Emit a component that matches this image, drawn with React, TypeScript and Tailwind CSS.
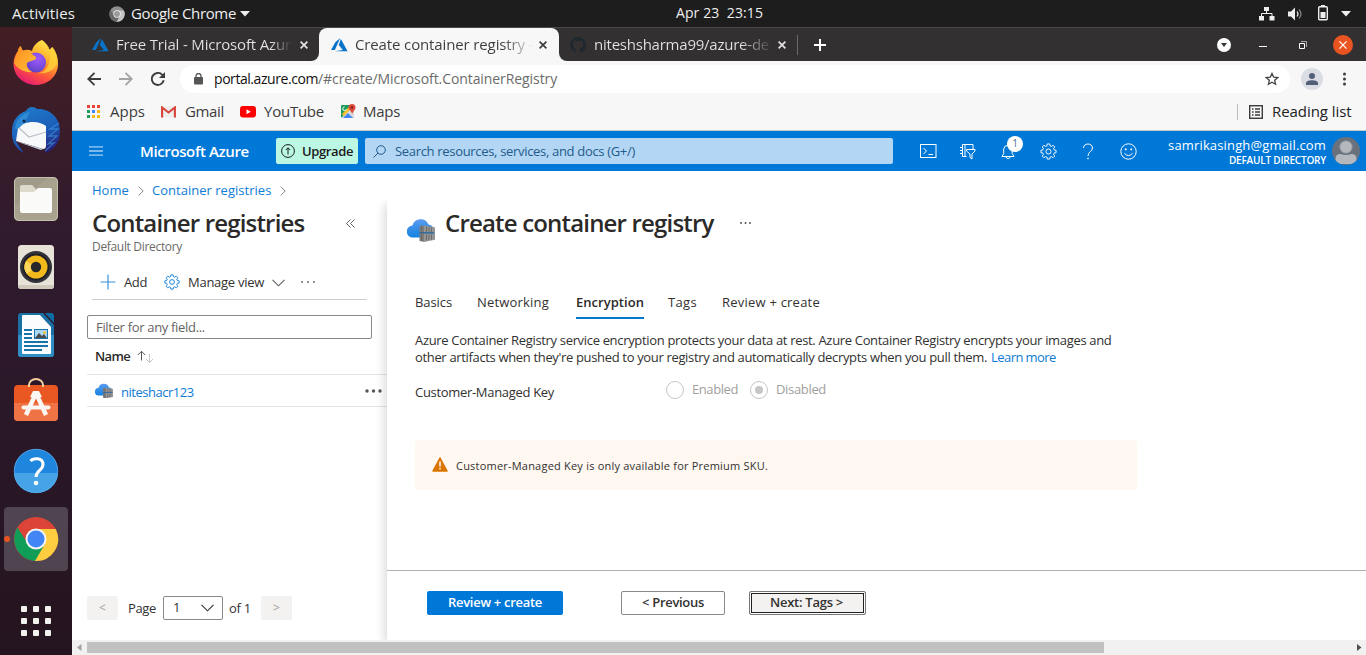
import React from 'react';

type P = { className?: string };

function Firefox() {
  return (
    <svg width="48" height="48" viewBox="0 0 48 48">
      <defs>
        <linearGradient id="ff" x1="0.8" y1="0" x2="0.25" y2="1">
          <stop offset="0" stopColor="#fff14f" /><stop offset="0.35" stopColor="#ffb02e" /><stop offset="0.65" stopColor="#ff5a36" /><stop offset="1" stopColor="#e3157a" />
        </linearGradient>
        <radialGradient id="fp" cx="0.6" cy="0.3" r="0.8"><stop offset="0" stopColor="#a05bff" /><stop offset="1" stopColor="#5a3fc0" /></radialGradient>
        <linearGradient id="fh" x1="0" y1="0" x2="1" y2="1"><stop offset="0" stopColor="#ff8a1f" /><stop offset="1" stopColor="#ffc43a" /></linearGradient>
      </defs>
      <path d="M30 2c4 3 6 6 7.500 10l2.500-3c4 5 6.500 11 6 18C45.500 38 36 47 24 47S1.500 38 1.500 26c0-6 2-10 4.500-13 .3-2 1-4 3-5 0 2 1 3.500 2 4.500 3-1 6-1 9 .5 1-5 5-9 10-11z" fill="url(#ff)" />
      <circle cx="24" cy="24.500" r="10" fill="url(#fp)" />
      <path d="M2 25c1-7 4-11 4-12 .3-2 1-4 3-5 0 2 1 4 2 5 4-.8 7 .5 9 3 2 2 4 2 4 4 0 3-6 2-9 5-1 3 1 7 5 9-8 1-15-4-18-9z" fill="url(#fh)" />
      <path d="M30 2c8 7 10 15 7 23-1 5-5 10-12 10 13 2 22-6 20-16-.5-4-2-7-4.500-10L38 12c-2-5-5-8-8-10z" fill="#ffd43a" opacity=".75" />
    </svg>
  );
}
function Thunderbird() {
  return (
    <svg width="50" height="50" viewBox="0 0 50 50">
      <defs><linearGradient id="tb" x1="0.2" y1="0" x2="0.7" y2="1"><stop offset="0" stopColor="#1f7ccb" /><stop offset="0.6" stopColor="#1b5db8" /><stop offset="1" stopColor="#2a1a72" /></linearGradient></defs>
      <path d="M21 1c3 0 4 1 5 2 12-1 23 8 23 22 0 12-6 20-16 22 2-2 2-4 1-6L4 34l9 13C5 44 0 34 1 25 1 14 8 7 15 5c1-2 3-4 6-4z" fill="url(#tb)" />
      <path d="M7 22c6-7 20-8 28-2v19c0 3-1 4-3 4L5 35z" fill="#f7f8fa" />
      <path d="M8 22l10 9 17-5" fill="none" stroke="#b9c0c9" strokeWidth="1.200" />
      <path d="M4 23C5 12 13 7 19 6c-3 5-3 8-8 13-2 2-3 4-7 4z" fill="#2f8bd4" />
      <path d="M48 17l-9 6 8 0-9 7 8 0-9 8 6-1-9 8" fill="none" stroke="#3f9be0" strokeWidth="1.300" opacity=".6" />
      <circle cx="13" cy="15" r="1.500" fill="#0e2340" />
      <path d="M4 35l28 8-2 1z" fill="#c9d3e6" />
    </svg>
  );
}
function Files() {
  return (
    <svg width="46" height="46" viewBox="0 0 46 46">
      <rect x="1" y="1" width="44" height="44" rx="5" fill="#a09a88" /><path d="M1 30L36 1h4q5 0 5 5v34q0 5-5 5H6q-5 0-5-5z" fill="#aea893" opacity=".5" />
      <rect x="1.500" y="1.500" width="43" height="43" rx="4.500" fill="none" stroke="#c5c0ae" />
      <path d="M7 11q0-2 2-2h10l4 4v8H7z" fill="#ddd9cc" /><path d="M7 16h14l4-4h12q2 0 2 2v21q0 2-2 2H9q-2 0-2-2z" fill="#fafaf9" />
    </svg>
  );
}
function Rhythmbox() {
  return (
    <svg width="38" height="46" viewBox="0 0 38 46">
      <rect x="1" y="1" width="36" height="44" rx="3.500" fill="#e7e3d9" /><path d="M1 41v1q0 3 3 3h30q3 0 3-3v-1z" fill="#cfcabc" />
      <circle cx="19" cy="23" r="16" fill="#33343b" /><circle cx="19" cy="23" r="13.500" fill="#1f2027" /><circle cx="19" cy="23" r="11.500" fill="#f2b91c" /><path d="M19 23L9 17a11.500 11.500 0 0 0 1 13z" fill="#ffd65c" /><circle cx="19" cy="23" r="5.200" fill="#26272b" />
    </svg>
  );
}
function Writer() {
  return (
    <svg width="38" height="46" viewBox="0 0 38 46">
      <path d="M4 1h22l11 12v29q0 3-3 3H4q-3 0-3-3V4q0-3 3-3z" fill="#1a6fa3" /><path d="M1 23h36v19q0 3-3 3H4q-3 0-3-3z" fill="#2f8fc4" />
      <path d="M28 1h6q3 0 3 3v7z" fill="#0f6ea8" />
      <path d="M6 3h17l11 12v26q0 1-1 1H6q-1 0-1-1V4q0-1 1-1z" fill="#fafcfd" />
      <path d="M7 18h8M7 22h8M7 26h8M7 30h24M7 34h24M7 38h18" stroke="#1a74aa" strokeWidth="2" />
      <rect x="17" y="17" width="14" height="10" fill="#1a74aa" /><rect x="18" y="18" width="12" height="8" fill="#a9daf5" /><path d="M18 26l4-5 3 3 2-2 3 4z" fill="#4b4b4b" /><circle cx="27.500" cy="20.500" r="1.500" fill="#f4c430" />
    </svg>
  );
}
function Software() {
  return (
    <svg width="46" height="44" viewBox="0 0 46 44">
      <path d="M16 9V7a7 6 0 0 1 14 0v2" fill="none" stroke="#f3cd9b" strokeWidth="2" />
      <rect x="1" y="7" width="44" height="36" rx="4" fill="#e95723" /><path d="M1 25h44v14q0 4-4 4H5q-4 0-4-4z" fill="#ef7345" />
      <path d="M16 9V6.500M30 9V6.500" stroke="#f3cd9b" strokeWidth="2" />
      <path d="M23 15L13 37M23 15l10 22" stroke="#faf6f3" strokeWidth="4.500" /><path d="M20 13h6l3 6H17z" fill="#faf6f3" /><path d="M10.500 29.500h25" stroke="#faf6f3" strokeWidth="4" strokeLinecap="round" />
    </svg>
  );
}
function Help() {
  return (
    <svg width="46" height="46" viewBox="0 0 46 46">
      <circle cx="23" cy="23" r="22" fill="#1e86dc" /><path d="M1 25a22 20 0 0 0 44 0z" fill="#46a3e6" /><circle cx="23" cy="23" r="21.700" fill="none" stroke="#58abe9" strokeWidth=".8" />
      <path d="M17.500 13C20 10 30 9 30 16.500c0 6-7 6-7 12.500" fill="none" stroke="#fff" strokeWidth="3" /><circle cx="23" cy="35" r="2.300" fill="#fff" />
    </svg>
  );
}
function Chrome({ size, mono }: { size: number; mono?: boolean }) {
  const c = mono ? ['#8d8d8d', '#c4c4c4', '#696969', '#9a9a9a'] : ['#db4437', '#ffcd40', '#0f9d58', '#4285f4'];
  return (
    <svg className="shrink-0" width={size} height={size} viewBox="0 0 46 46">
      <circle cx="23" cy="23" r="22" fill={c[0]} />
      <path d="M23 13h19.700A22 22 0 0 1 22 45l10-17z" fill={c[1]} />
      <path d="M4.500 11.500A22 22 0 0 0 22.500 45L32 28l-17 0z" fill={c[2]} />
      <path d="M32 28L22 45h2l12-20z" fill={c[1]} />
      <circle cx="23" cy="23" r="10.500" fill="#f4f4f4" /><circle cx="23" cy="23" r="8.500" fill={c[3]} />
    </svg>
  );
}
function Azure({ className = '' }: P) {
  return <svg className={className} width="17" height="14" viewBox="0 0 17 14"><path d="M9.200 0L4.300 4.300 0 12h3.900zM9.900 1.100L7.700 7l4.100 4.900L3.900 13.200H16.600z" fill="#0a73c8" /></svg>;
}
function Github() {
  return <svg width="16" height="16" viewBox="0 0 16 16" fill="#20282f"><path d="M8 0a8 8 0 0 0-2.530 15.590c.4.070.55-.17.55-.38v-1.490c-2.230.48-2.700-.95-2.700-.95-.36-.92-.89-1.170-.89-1.170-.73-.5.050-.49.050-.49.810.06 1.230.83 1.230.83.720 1.230 1.880.87 2.340.67.070-.52.280-.88.510-1.080-1.780-.2-3.640-.89-3.640-3.950 0-.87.310-1.590.82-2.150-.08-.2-.36-1.020.08-2.120 0 0 .67-.22 2.200.82a7.600 7.600 0 0 1 4 0c1.530-1.040 2.200-.82 2.200-.82.440 1.100.160 1.920.080 2.120.51.560.82 1.270.82 2.150 0 3.070-1.870 3.750-3.650 3.950.29.250.54.730.54 1.480v2.200c0 .21.150.46.550.38A8 8 0 0 0 8 0z" /></svg>;
}
function X({ className = '' }: P) {
  return <svg className={className} width="8" height="8" viewBox="0 0 8 8"><path d="M.6.6l6.800 6.800M7.400.6L.6 7.400" stroke="currentColor" strokeWidth="1.700" /></svg>;
}
function Gear({ size, className = '' }: { size: number; className?: string }) {
  return (
    <svg className={className} width={size} height={size} viewBox="0 0 18 18" fill="none" stroke="currentColor">
      <path d="M7.400 3L7.700 1h2.600l.3 2 1.500.6 1.700-1.200 1.800 1.800-1.200 1.700.6 1.500 2 .3v2.600l-2 .3-.6 1.500 1.200 1.700-1.800 1.800-1.700-1.200-1.500.6-.3 2H7.700l-.3-2-1.500-.6-1.700 1.200-1.800-1.800 1.200-1.700L3 10.600l-2-.3V7.700l2-.3.6-1.500-1.200-1.700 1.800-1.800 1.700 1.200z" />
      <circle cx="9" cy="9" r="2.700" />
    </svg>
  );
}
function Registry({ size }: { size: number }) {
  return (
    <svg width={size} height={size * 24 / 28} viewBox="0 0 28 24">
      <defs><linearGradient id="cl" x1="0" y1="0" x2="0" y2="1"><stop offset="0" stopColor="#5a9cf0" /><stop offset="1" stopColor="#1282e0" /></linearGradient></defs>
      <path d="M6 19.500a6 6 0 0 1-.5-12A8.500 8.500 0 0 1 21.500 6.500 6.500 6.500 0 0 1 20 19.500z" fill="url(#cl)" />
      <path d="M12.500 8l5-.6V14h-5zM12.500 15h5v9l-5-1z" fill="#7c7c7c" /><path d="M17 7.500l11 1.800v5.200L17 14.300zM17 15.500l11 0v6.200L17 24z" fill="#969696" />
      <path d="M19.500 8.500v5.500M22 9v5M24.500 9.500v4.500M19.500 16.500v6M22 16.500v5.500M24.500 16.500v5M14.500 8.500V13M14.500 16v6.500" stroke="#646464" strokeWidth=".9" />
      <path d="M12.500 14.700l15.500.3" stroke="#365b7c" strokeWidth="1" />
    </svg>
  );
}
function Chev({ className = '' }: P) {
  return <svg className={className} width="6" height="10" viewBox="0 0 6 10" fill="none" stroke="#8a8886"><path d="M.6.5L5.200 5 .6 9.500" /></svg>;
}
function Down({ className = '' }: P) {
  return <svg className={className} width="13" height="8" viewBox="0 0 13 8" fill="none" stroke="currentColor" strokeWidth="1.100"><path d="M.5.8l6 6 6-6" /></svg>;
}
function Dots({ className = '', r = 0.9, w = 15 }: { className?: string; r?: number; w?: number }) {
  return <svg className={className} width={w} height="4" viewBox={`0 0 ${w} 4`} fill="currentColor"><circle cx="2" cy="2" r={r} /><circle cx={w / 2} cy="2" r={r} /><circle cx={w - 2} cy="2" r={r} /></svg>;
}

function TopBar() {
  return (
    <header className="flex h-[27px] shrink-0 items-center bg-[#1d1d1d] text-[15px] text-[#eeeeee]">
      <span className="ml-3 w-[97px] tracking-[0.12px]">Activities</span>
      <Chrome size={16} mono />
      <span className="ml-[6px] w-[106px] tracking-[-0.33px] whitespace-nowrap">Google Chrome</span>
      <svg className="ml-[3px]" width="10" height="6" viewBox="0 0 10 6"><path d="M0 0h10L5 5.500z" fill="#eee" /></svg>
      <span className="ml-[426px] w-[90px] pb-px whitespace-pre text-sm tracking-[0.100px]">Apr 23  23:15</span>
      <div className="ml-auto flex items-center">
        <svg width="16" height="14" viewBox="0 0 16 14" fill="#eee"><path d="M5 0h5v4H5zM0 9h5v4.500H0zM10.500 9h5v4.500h-5z" /><path d="M7.500 4v3M2.500 9V6.500h10.500V9" stroke="#eee" fill="none" /></svg>
        <svg className="ml-[13px]" width="16" height="14" viewBox="0 0 16 14"><path d="M0 4.500h3l4-4v13l-4-4H0z" fill="#eee" /><path d="M9 4.500q2 2.500 0 5" stroke="#eee" fill="none" strokeWidth="1.200" /><path d="M11 2.500q4 4.500 0 9" stroke="#888" fill="none" strokeWidth="1.200" /></svg>
        <svg className="mr-px mb-px ml-[14px]" width="10" height="16" viewBox="0 0 10 16"><path d="M3 0h4v2H3z" fill="#eee" /><rect x=".7" y="1.700" width="8.600" height="13" rx="1" fill="none" stroke="#eee" strokeWidth="1.400" /><path d="M2.500 7h5v6h-5z" fill="#eee" /></svg>
        <svg className="mr-[15px] ml-[12px]" width="10" height="6" viewBox="0 0 10 6"><path d="M0 0h10L5 5.500z" fill="#eee" /></svg>
      </div>
    </header>
  );
}

function Dock() {
  return (
    <nav className="flex w-[72px] shrink-0 flex-col items-center bg-linear-to-b from-[#431e24] via-[#2f1a2e] via-35% to-[#24141f]">
      <div className="-mt-px flex h-[71px] items-center"><Firefox /></div>
      <div className="flex h-[68px] items-center"><Thunderbird /></div>
      <div className="flex h-[68px] items-center"><Files /></div>
      <div className="flex h-[68px] items-center"><Rhythmbox /></div>
      <div className="flex h-[68px] items-center"><Writer /></div>
      <div className="flex h-[62px] items-center"><Software /></div>
      <div className="mt-[5px] flex h-[70px] items-center"><Help /></div>
      <div className="mt-px flex h-16 w-16 items-center rounded-[4px] bg-[#504450]">
        <span className="h-[6px] w-[6px] rounded-full bg-[#e95420]" /><span className="ml-[3px]"><Chrome size={46} /></span>
      </div>
      <div className="mt-[35px] grid grid-cols-3 gap-[6px]">
        {Array.from({ length: 9 }, (_, i) => <span key={i} className="h-[6px] w-[6px] rounded-[1px] bg-[#f2f1ee]" />)}
      </div>
    </nav>
  );
}

function TabStrip() {
  return (
    <div className="flex h-[34px] shrink-0 items-stretch border-t border-[#4a4848] bg-[#f7f7f7] text-[15px]">
      <div className="flex w-[247px] items-center rounded-br-[8px] bg-[#333031] text-[#e4e4e4]">
        <Azure className="ml-5" />
        <span className="ml-[7px] w-[176px] overflow-hidden bg-linear-to-r from-[#e4e4e4] from-88% to-[#333031] bg-clip-text pb-px tracking-[-0.170px] whitespace-nowrap text-transparent">Free Trial - Microsoft Azur</span>
        <X className="ml-[8px]" />
      </div>
      <div className="w-[240px] bg-[#333031]">
        <div className="flex h-full items-center rounded-t-[8px] bg-[#f7f7f7] text-[#3c3c3c]">
          <Azure className="ml-3" />
          <span className="ml-[7px] w-[180px] bg-linear-to-r from-[#3c3c3c] from-82% to-[#f7f7f7] to-99% bg-clip-text pb-px tracking-[-0.130px] whitespace-nowrap text-transparent">Create container registry -</span>
          <X className="ml-[4px]" />
        </div>
      </div>
      <div className="flex flex-1 items-center rounded-bl-[8px] bg-[#333031] text-[#e4e4e4]">
        <span className="ml-[11px]"><Github /></span>
        <span className="ml-[8px] w-[175px] overflow-hidden bg-linear-to-r from-[#e4e4e4] from-84% to-[#4a4848] bg-clip-text pb-px tracking-[-0.230px] whitespace-nowrap text-transparent">niteshsharma99/azure-de</span>
        <X className="ml-[9px]" />
        <span className="ml-[11px] h-5 w-px bg-[#6b6969]" />
        <svg className="ml-4" width="12" height="12" viewBox="0 0 12 12"><path d="M6 0v12M0 6h12" stroke="#fff" strokeWidth="2" /></svg>
        <div className="mr-[13px] ml-auto flex items-center">
          <span className="flex h-[14px] w-[14px] items-center justify-center rounded-full bg-white"><svg width="6" height="4" viewBox="0 0 6 4"><path d="M0 0h6L3 4z" fill="#333" /></svg></span>
          <span className="mt-[4px] ml-[28px] h-px w-2 bg-white" />
          <svg className="ml-[32px]" width="8" height="8" viewBox="0 0 8 8" fill="none" stroke="#fff"><path d="M.5 2.500h5v5h-5z" /><path d="M2 .5h5.500V6" stroke="#aaa" /></svg>
          <span className="ml-[26px] flex h-5 w-5 items-center justify-center rounded-full bg-[#e95420] text-white"><svg width="8" height="8" viewBox="0 0 8 8"><path d="M.4.4l7.200 7.200M7.600.4L.4 7.600" stroke="#fff" strokeWidth="1.200" /></svg></span>
        </div>
      </div>
    </div>
  );
}

function AddressBar() {
  return (
    <div className="flex h-[36px] shrink-0 items-center bg-[#f7f7f7] text-[#333]">
      <svg className="ml-[15px]" width="14" height="14" viewBox="0 0 14 14" fill="none" stroke="#3c3c3c" strokeWidth="1.800"><path d="M14 7H1.500M7.500 .8L1.300 7l6.200 6.200" /></svg>
      <svg className="ml-[18px]" width="14" height="14" viewBox="0 0 14 14" fill="none" stroke="#a3a3a3" strokeWidth="1.800"><path d="M0 7h12.500M6.500.8L12.700 7l-6.200 6.200" /></svg>
      <svg className="ml-[18px]" width="14" height="14" viewBox="0 0 14 14" fill="none" stroke="#3c3c3c" strokeWidth="1.900"><path d="M12.700 8.200A6 6 0 1 1 11 2.600L12.600 4.300" /><path d="M14 0v6H8z" fill="#3c3c3c" stroke="none" /></svg>
      <div className="ml-[15px] flex h-7 w-[1110px] items-center rounded-full bg-white">
        <svg className="ml-[14px]" width="9" height="12" viewBox="0 0 9 12"><path d="M2 5V3a2.500 2.500 0 0 1 5 0v2" fill="none" stroke="#555" strokeWidth="1.300" /><rect y="4" width="9" height="7.500" rx="1" fill="#555" /></svg>
        <span className="ml-[11px] w-[104px] text-sm tracking-[-0.440px] whitespace-nowrap text-[#111]">portal.azure.com</span>
        <span className="text-sm tracking-[-0.080px] text-[#6b6b6b]">/#create/Microsoft.ContainerRegistry</span>
        <svg className="mr-[11px] ml-auto" width="14" height="14" viewBox="0 0 14 14" fill="none" stroke="#444" strokeWidth="1.300"><path d="M7 1.400l1.700 3.800 4.100.4-3.100 2.700.9 4L7 10.200l-3.600 2.100.9-4L1.200 5.600l4.100-.4z" /></svg>
      </div>
      <span className="ml-[11px] flex h-[22px] w-[22px] items-center justify-center rounded-full bg-[#dadde3]"><svg width="12" height="12" viewBox="0 0 12 12" fill="#525f77"><circle cx="6" cy="3" r="3" /><path d="M0 12V10.500C0 8 3 7.300 6 7.300s6 .7 6 3.200V12z" /></svg></span>
      <svg className="ml-[20px]" width="4" height="14" viewBox="0 0 4 14" fill="#3c3c3c"><circle cx="1.500" cy="2" r="1.500" /><circle cx="1.500" cy="7" r="1.500" /><circle cx="1.500" cy="12" r="1.500" /></svg>
    </div>
  );
}

const appDots = ['bg-[#e94335]', 'bg-[#e94335]', 'bg-[#e94335]', 'bg-[#1e9b57]', 'bg-[#4285f4]', 'bg-[#f5b912]', 'bg-[#1e9b57]', 'bg-[#f5b912]', 'bg-[#f5b912]'];

function Bookmarks() {
  return (
    <div className="flex h-[34px] shrink-0 items-center border-b border-[#c4c8cb] bg-[#f7f7f7] pb-[4px] text-[15px] text-[#3c3c3c]">
      <div className="ml-[15px] grid grid-cols-3 gap-[2px]">{appDots.map((c, i) => <span key={i} className={`h-[3px] w-[3px] ${c}`} />)}</div>
      <span className="ml-[10px] w-[51px] pb-px">Apps</span>
      <svg width="15" height="12" viewBox="0 0 15 12"><path d="M0 0h15v11.500H0z" fill="#eee" /><path d="M1.100 11.500V1.500l6.400 5 6.400-5v10" fill="none" stroke="#d8443a" strokeWidth="2.100" /></svg>
      <span className="ml-[9px] w-[55px] pb-px tracking-[-0.340px]">Gmail</span>
      <svg width="16" height="12" viewBox="0 0 16 12"><rect width="16" height="11.500" rx="3" fill="#f00" /><path d="M6.500 3.300L10.800 5.800 6.500 8.300z" fill="#fff" /></svg>
      <span className="ml-2 w-[77px] pb-px tracking-[-0.240px]">YouTube</span>
      <svg width="15" height="15" viewBox="0 0 15 15"><rect y="1" width="13" height="13" rx="1" fill="#1e9e5a" /><path d="M0 14L13 1v12q0 1-1 1z" fill="#dcdcdc" /><path d="M2 14l5-5 5 5z" fill="#4285f4" /><path d="M1 10L10 1l2 2-9 9z" fill="#fbc02d" /><path d="M3.500 3a1.800 1.800 0 1 0 1.800 2" stroke="#fff" fill="none" /><path d="M11 0a3.500 3.500 0 0 1 3.500 3.500C14.500 6 12 7 11.200 10 10.500 7 7.500 6 7.500 3.500A3.500 3.500 0 0 1 11 0z" fill="#de4b3c" /><circle cx="11" cy="3.500" r="1.200" fill="#7b1f17" /></svg>
      <span className="ml-[7px] pb-px tracking-[-0.290px]">Maps</span>
      <span className="ml-auto h-4 w-px bg-[#bdbdbd]" />
      <svg className="ml-[11px]" width="14" height="14" viewBox="0 0 14 14" fill="none" stroke="#3c3c3c"><rect x=".7" y=".7" width="12.600" height="12.600" strokeWidth="1.400" /><path d="M3 4h1.500M3 7h1.500M3 10h1.500M6 4h5M6 7h5M6 10h5" strokeWidth="1.500" /></svg>
      <span className="mr-[14px] ml-[9px] w-[80px] pb-px tracking-[-0.060px] whitespace-nowrap text-[#222]">Reading list</span>
    </div>
  );
}

function AzureHeader() {
  return (
    <div className="flex h-10 shrink-0 items-center bg-[#0078d7] text-white">
      <svg className="ml-[17px]" width="14" height="10" viewBox="0 0 14 10"><path d="M0 .8h14M0 5h14M0 9.200h14" stroke="#a7cff2" strokeWidth="1.300" /></svg>
      <span className="ml-[37px] w-[136px] text-[15px] font-semibold tracking-[-0.380px] whitespace-nowrap">Microsoft Azure</span>
      <div className="flex h-[26px] w-[82px] items-center rounded-[2px] bg-[#bbf7e3] text-[#1b1b1b]">
        <svg className="ml-[5px]" width="14" height="14" viewBox="0 0 14 14" fill="none" stroke="#1b1b1b"><circle cx="7" cy="7" r="6.400" /><path d="M7 10.500V3.800M4.800 6L7 3.800 9.200 6" /></svg>
        <span className="ml-[7px] pt-px text-[13px] font-semibold tracking-[-0.360px]">Upgrade</span>
      </div>
      <div className="ml-[7px] flex h-[26px] w-[528px] items-center rounded-[2px] bg-[#b2d6f3] text-[#235b8c]">
        <svg className="ml-2" width="13" height="13" viewBox="0 0 13 13" fill="none" stroke="#235b8c"><circle cx="8" cy="5" r="4.300" /><path d="M5 8L.5 12.500" /></svg>
        <span className="ml-[9px] pt-[2px] text-[13px] tracking-[-0.320px]">Search resources, services, and docs (G+/)</span>
      </div>
      <svg className="ml-[27px]" width="17" height="14" viewBox="0 0 17 14" fill="none" stroke="#fff"><rect x=".5" y=".5" width="15.500" height="13" /><path d="M3.500 4l3 3-3 3M8.500 10.500h4.500" /></svg>
      <svg className="ml-[22px]" width="17" height="17" viewBox="0 0 17 17" fill="none" stroke="#fff"><path d="M14 6V1.500H3.500v12h4M6 1.500v12M1 4.500h3M1 7.500h3M1 10.500h3" /><path d="M7.500 6.500h8.500v1.500l-3 3v5l-2-1.500v-3.500l-3.500-3z" fill="#0078d7" /></svg>
      <div className="relative ml-[25px] h-[17px] w-[15px]">
        <svg width="15" height="17" viewBox="0 0 15 17" fill="none" stroke="#fff"><path d="M1 13.500h12l-1.800-3V6a4.300 4.300 0 0 0-8.500 0v4.500zM5 14a2.200 2.200 0 0 0 4.200 0" /></svg>
        <span className="absolute -top-[7px] left-[6px] flex h-4 w-4 items-center justify-center rounded-full bg-white text-[10px] text-[#4c6f92]">1</span>
      </div>
      <Gear size={17} className="ml-[24px]" />
      <svg className="ml-[25px]" width="12" height="17" viewBox="0 0 12 17" fill="none" stroke="#fff"><path d="M1.500 5C1.500 2.500 3.500 1 6 1s4.500 1.500 4.500 4c0 3.500-4.500 3.500-4.500 8" /><circle cx="6" cy="15.500" r=".5" /></svg>
      <svg className="ml-[26px]" width="17" height="17" viewBox="0 0 17 17" fill="none" stroke="#fff"><circle cx="8.500" cy="8.500" r="7.700" /><path d="M4.500 10.300q4 4.500 8 0" /><circle cx="5.800" cy="6.300" r=".6" fill="#fff" /><circle cx="11.200" cy="6.300" r=".6" fill="#fff" /></svg>
      <div className="ml-auto flex w-[160px] flex-col items-end pt-[2px]">
        <span className="text-[13px] leading-[16px] tracking-[0.150px]">samrikasingh@gmail.com</span>
        <span className="text-[10px] leading-[15px] font-semibold tracking-[-0.200px]">DEFAULT DIRECTORY</span>
      </div>
      <svg className="mr-[6px] ml-[6px]" width="28" height="28" viewBox="0 0 28 28"><defs><clipPath id="av"><circle cx="14" cy="14" r="14" /></clipPath></defs><circle cx="14" cy="14" r="14" fill="#69727c" /><g clipPath="url(#av)" fill="#b5b9bd"><circle cx="14" cy="10" r="6.300" stroke="#858d95" strokeWidth=".8" /><path d="M3.500 27v-5q0-5 5-5 5.500 2 11 0 5 0 5 5v5z" /></g></svg>
    </div>
  );
}

function Sidebar() {
  return (
    <aside className="flex w-[315px] shrink-0 flex-col">
      <h2 className="mt-[6px] ml-5 h-[32px] text-2xl leading-[32px] font-semibold tracking-[-0.820px] text-[#2b2a29]">
        <span className="flex items-center"><span className="w-[254px]">Container registries</span>
          <svg width="10" height="9" viewBox="0 0 10 9" fill="none" stroke="#605e5c"><path d="M4.500.5l-4 4 4 4M8.500.5l-4 4 4 4" /></svg>
        </span>
      </h2>
      <p className="ml-5 text-xs leading-4 tracking-[-0.320px] text-[#6b6967]">Default Directory</p>
      <div className="mt-[9px] ml-5 flex h-[36px] w-[275px] items-center border-b border-[#cfcdcb] text-[13px] text-[#323130]">
        <svg className="ml-2" width="16" height="16" viewBox="0 0 16 16"><path d="M8 .5v15M.5 8h15" stroke="#3a96dd" strokeWidth="1.200" /></svg>
        <span className="ml-2 w-[40px] pt-[2px] tracking-[-0.380px]">Add</span>
        <Gear size={16} className="text-[#0078d4]" />
        <span className="ml-[8px] w-[84px] pt-[2px] tracking-[-0.270px]">Manage view</span>
        <Down className="mt-[2px] text-[#605e5c]" />
        <Dots className="ml-[15px] text-[#605e5c]" w={16} />
      </div>
      <div className="mt-[15px] ml-[15px] flex h-6 w-[285px] items-center rounded-[2px] border border-[#8a8886] bg-white pt-px pl-2 text-[13px] tracking-[-0.320px] text-[#666462]">Filter for any field...</div>
      <div className="ml-[15px] flex h-[36px] items-center border-b border-[#e6e4e2] pl-2 text-[13px]">
        <span className="w-[42px] font-semibold tracking-[-0.650px] text-[#2b2a29]">Name</span>
        <svg width="17" height="14" viewBox="0 0 17 14" fill="none"><path d="M4.500 10.500V1.500M.8 5l3.700-3.700L8.200 5" stroke="#555" /><path d="M12.500 4v8.500M9 9l3.500 3.500L16 9" stroke="#c8c6c4" /></svg>
      </div>
      <div className="ml-[15px] flex h-8 items-center border-b border-[#e6e4e2] pl-2 text-[13px]">
        <Registry size={18} />
        <span className="ml-[8px] flex-1 pt-[4px] tracking-[-0.480px] text-[#0f7cd6]">niteshacr123</span>
        <Dots className="mr-[5px] text-[#555]" r={1.7} w={17} />
      </div>
      <div className="mt-auto mb-5 ml-[15px] flex h-6 items-center text-[13px] text-[#323130]">
        <span className="flex h-6 w-[31px] items-center justify-center rounded-[2px] bg-[#f3f2f1] text-xs text-[#a19f9d]">&lt;</span>
        <span className="ml-[10px] w-[35px] pt-px tracking-[-0.350px]">Page</span>
        <span className="flex h-6 w-[60px] items-center justify-between rounded-[2px] border border-[#8a8886] pr-[8px] pl-[9px]">1<Down /></span>
        <span className="ml-[6px] w-[32px] pt-px tracking-[-0.250px]">of 1</span>
        <span className="flex h-6 w-[31px] items-center justify-center rounded-[2px] bg-[#f3f2f1] text-xs text-[#a19f9d]">&gt;</span>
      </div>
    </aside>
  );
}

function Blade() {
  return (
    <main className="mt-[-1px] flex flex-1 flex-col bg-white text-[13px] text-[#323130] shadow-[-2px_4px_10px_rgba(0,0,0,0.16)] [clip-path:inset(0_0_0_-14px)]">
      <div className="flex h-[46px] items-start pl-5">
        <span className="mt-[18px]"><Registry size={28} /></span>
        <h1 className="mt-[6px] ml-[10px] w-[294px] text-2xl leading-[34px] font-semibold tracking-[-0.820px] text-[#2b2a29]">Create container registry</h1>
        <Dots className="mt-[21px] text-[#444]" r={0.9} w={13} />
      </div>
      <div className="mt-[43px] ml-7 flex h-[30px] items-start leading-[26px]">
        <span className="w-[62px] tracking-[-0.090px]">Basics</span>
        <span className="w-[99px] tracking-[0.190px]">Networking</span>
        <span className="h-[30px] w-[68px] border-b-[2px] border-[#0078d4] font-semibold tracking-[0.040px] text-[#2b2a29]">Encryption</span>
        <span className="ml-6 w-[54px] tracking-[0.340px]">Tags</span>
        <span className="tracking-[0.220px]">Review + create</span>
      </div>
      <div className="mt-[13px] ml-7 leading-[17px] whitespace-nowrap">
        <p className="tracking-[-0.330px]">Azure Container Registry service encryption protects your data at rest. Azure Container Registry encrypts your images and</p>
        <p className="flex tracking-[-0.340px]"><span className="w-[576px]">other artifacts when they're pushed to your registry and automatically decrypts when you pull them.</span><a className="tracking-[-0.560px] text-[#0f7cd6]">Learn more</a></p>
      </div>
      <div className="mt-[14px] ml-7 flex h-[20px] items-center">
        <span className="w-[251px] pt-[6px] tracking-[-0.310px]">Customer-Managed Key</span>
        <span className="mb-px h-[18px] w-[18px] rounded-full border border-[#c8c6c4]" />
        <span className="ml-2 w-[58px] tracking-[-0.420px] text-[#a19f9d]">Enabled</span>
        <span className="mb-px flex h-[18px] w-[18px] items-center justify-center rounded-full border border-[#c8c6c4]"><span className="h-2 w-2 rounded-full bg-[#c8c6c4]" /></span>
        <span className="ml-2 tracking-[-0.330px] text-[#a19f9d]">Disabled</span>
      </div>
      <div className="mt-[40px] ml-7 flex h-[50px] w-[722px] items-center rounded-[2px] bg-[#fff8f1] text-[11px]">
        <svg className="mb-px ml-[17px]" width="16" height="15" viewBox="0 0 16 15"><path d="M8 1l7 13H1z" fill="#db7500" stroke="#db7500" strokeWidth="1.500" strokeLinejoin="round" /><path d="M8 4.500v5M8 10.700v1.600" stroke="#fff" strokeWidth="1.500" /></svg>
        <span className="ml-2 pt-[2px] tracking-[0.210px]">Customer-Managed Key is only available for Premium SKU.</span>
      </div>
      <footer className="mt-auto flex h-[70px] items-start border-t border-[#b3b1af] pt-5 pl-10 font-semibold">
        <button className="h-6 w-[136px] rounded-[2px] bg-[#0078d7] tracking-[-0.290px] text-white">Review + create</button>
        <button className="ml-[58px] h-6 w-[104px] rounded-[2px] border border-[#8a8886] tracking-[-0.300px]">&lt; Previous</button>
        <button className="ml-[24px] h-6 w-[117px] rounded-[2px] border border-[#777] bg-[#f3f2f1] pr-[2px] tracking-[-0.260px] shadow-[inset_0_0_0_1px_#fff,inset_0_0_0_2px_#222]">Next: Tags &gt;</button>
      </footer>
    </main>
  );
}

export default function App() {
  return (
    <div className="flex h-[655px] w-[1366px] flex-col overflow-hidden bg-white font-['Open_Sans',sans-serif]">
      <TopBar />
      <div className="flex min-h-0 flex-1">
        <Dock />
        <div className="flex min-w-0 flex-1 flex-col">
          <TabStrip />
          <AddressBar />
          <Bookmarks />
          <AzureHeader />
          <div className="flex h-[469px] flex-col overflow-hidden">
            <div className="ml-5 flex h-[30px] shrink-0 items-center pt-[9px] text-[13px] text-[#0f7cd6]">
              <span className="w-[46px]">Home</span><Chev />
              <span className="ml-[8px] w-[128px] tracking-[0.020px] whitespace-nowrap">Container registries</span><Chev />
            </div>
            <div className="flex flex-1"><Sidebar /><Blade /></div>
          </div>
          <div className="flex h-[15px] items-center bg-[#f1f1f1]">
            <svg className="ml-[5px]" width="5" height="7" viewBox="0 0 5 7"><path d="M4.500 0v7L0 3.500z" fill="#a3a3a3" /></svg>
            <span className="ml-[5px] h-[11px] w-[1017px] bg-[#c1c1c1]" />
            <svg className="mr-[4px] ml-auto" width="5" height="7" viewBox="0 0 5 7"><path d="M0 0v7l4.500-3.500z" fill="#505050" /></svg>
          </div>
        </div>
      </div>
    </div>
  );
}
